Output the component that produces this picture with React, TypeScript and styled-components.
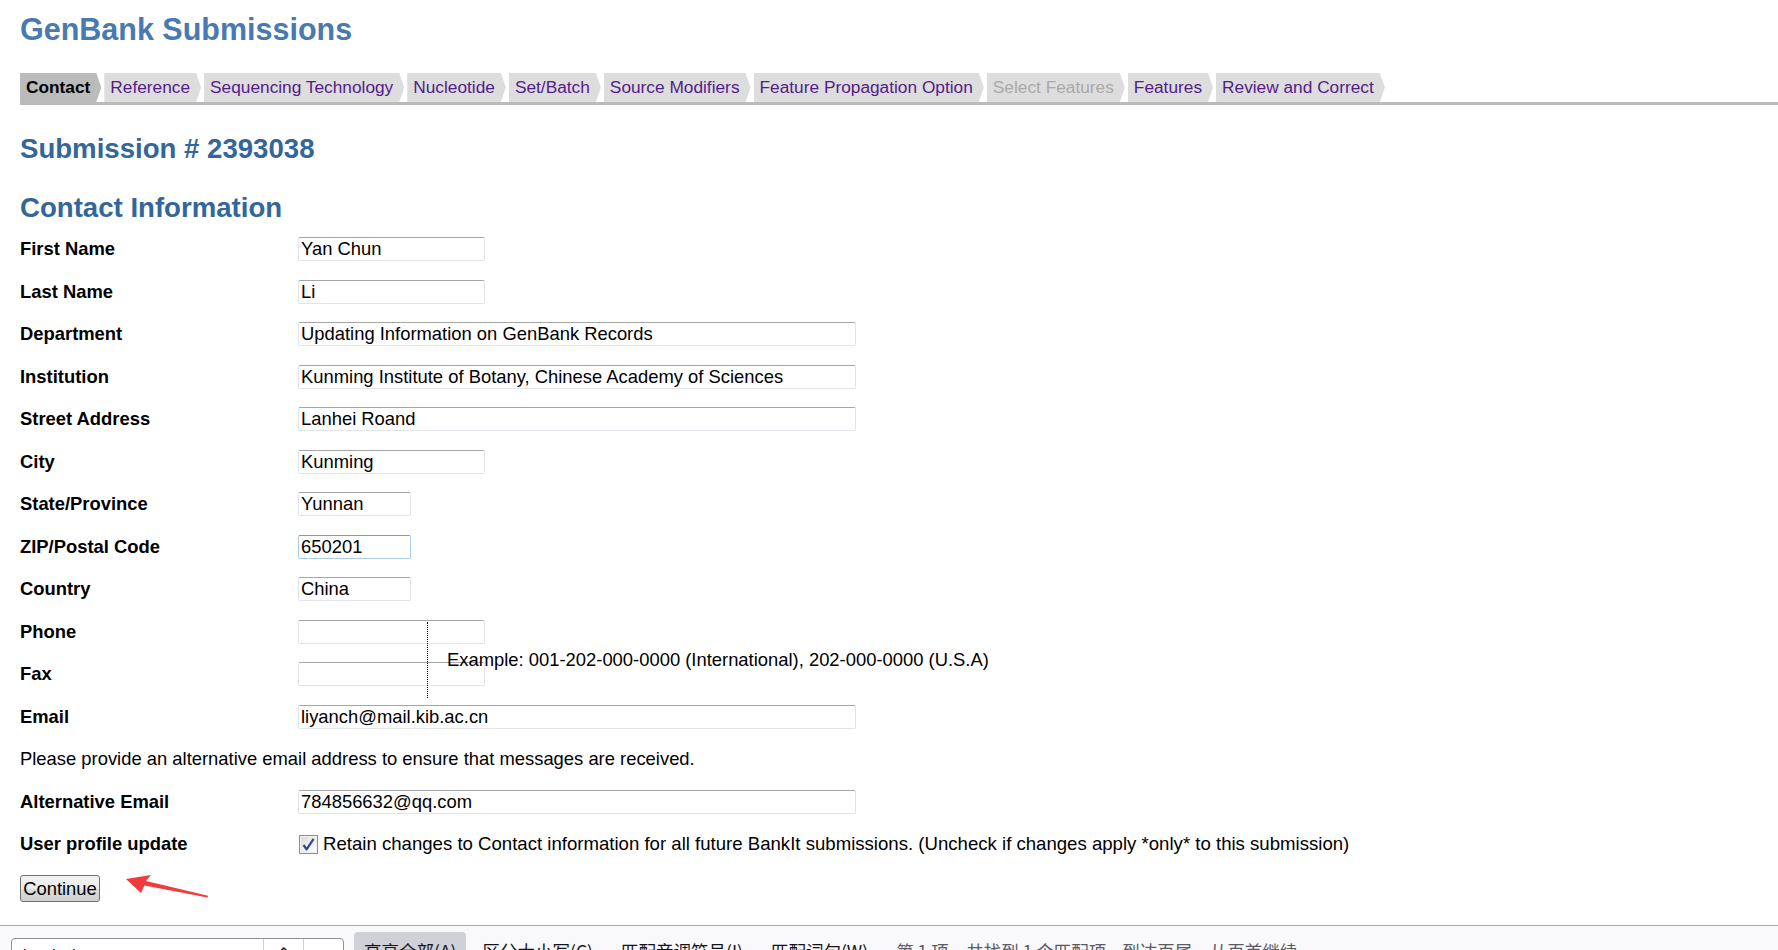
import { useState } from 'react';
import styled, { createGlobalStyle } from 'styled-components';

const GlobalStyle = createGlobalStyle`
  html, body {
    margin: 0;
    padding: 0;
    background: #fff;
  }
  body {
    font-family: 'Liberation Sans', Arial, sans-serif;
    color: #000;
  }
`;

type Step = { name: string; active?: boolean; disabled?: boolean };

const steps: Step[] = [
  { name: 'Contact', active: true },
  { name: 'Reference' },
  { name: 'Sequencing Technology' },
  { name: 'Nucleotide' },
  { name: 'Set/Batch' },
  { name: 'Source Modifiers' },
  { name: 'Feature Propagation Option' },
  { name: 'Select Features', disabled: true },
  { name: 'Features' },
  { name: 'Review and Correct' },
];

type Field = { label: string; value: string; size: 'short' | 'medium' | 'wide'; focused?: boolean };

const topFields: Field[] = [
  { label: 'First Name', value: 'Yan Chun', size: 'medium' },
  { label: 'Last Name', value: 'Li', size: 'medium' },
  { label: 'Department', value: 'Updating Information on GenBank Records', size: 'wide' },
  { label: 'Institution', value: 'Kunming Institute of Botany, Chinese Academy of Sciences', size: 'wide' },
  { label: 'Street Address', value: 'Lanhei Roand', size: 'wide' },
  { label: 'City', value: 'Kunming', size: 'medium' },
  { label: 'State/Province', value: 'Yunnan', size: 'short' },
  { label: 'ZIP/Postal Code', value: '650201', size: 'short', focused: true },
  { label: 'Country', value: 'China', size: 'short' },
];

const fieldWidths = { short: 113, medium: 187, wide: 558 };

function App() {
  const [values, setValues] = useState<Record<string, string>>(() => {
    const v: Record<string, string> = {
      Phone: '',
      Fax: '',
      Email: 'liyanch@mail.kib.ac.cn',
      'Alternative Email': '784856632@qq.com',
    };
    topFields.forEach((f) => (v[f.label] = f.value));
    return v;
  });
  const [retain, setRetain] = useState(true);

  const update = (key: string, value: string) =>
    setValues((prev) => ({ ...prev, [key]: value }));

  return (
    <>
      <GlobalStyle />
      <StyledPage>
        <StyledContent>
          <StyledTitle>GenBank Submissions</StyledTitle>
          <StyledTabBar>
            {steps.map((step) => (
              <StyledTab key={step.name} $active={step.active} $disabled={step.disabled}>
                {step.name}
              </StyledTab>
            ))}
          </StyledTabBar>

          <StyledHeading className="submission">Submission # 2393038</StyledHeading>
          <StyledHeading className="section">Contact Information</StyledHeading>

          <StyledForm onSubmit={(e) => e.preventDefault()}>
            {topFields.map((f) => (
              <StyledRow key={f.label}>
                <StyledLabel>{f.label}</StyledLabel>
                <StyledInput
                  $width={fieldWidths[f.size]}
                  $focused={f.focused}
                  value={values[f.label]}
                  onChange={(e) => update(f.label, e.target.value)}
                />
              </StyledRow>
            ))}

            <StyledPhoneBlock>
              <StyledLabel className="phone-label">Phone</StyledLabel>
              <StyledInput
                className="phone-input"
                $width={187}
                value={values.Phone}
                onChange={(e) => update('Phone', e.target.value)}
              />
              <StyledLabel className="fax-label">Fax</StyledLabel>
              <StyledInput
                className="fax-input"
                $width={187}
                value={values.Fax}
                onChange={(e) => update('Fax', e.target.value)}
              />
              <StyledExample>
                Example: 001-202-000-0000 (International), 202-000-0000 (U.S.A)
              </StyledExample>
            </StyledPhoneBlock>

            <StyledRow>
              <StyledLabel>Email</StyledLabel>
              <StyledInput
                $width={558}
                value={values.Email}
                onChange={(e) => update('Email', e.target.value)}
              />
            </StyledRow>
            <StyledNote>
              Please provide an alternative email address to ensure that messages are received.
            </StyledNote>
            <StyledRow>
              <StyledLabel>Alternative Email</StyledLabel>
              <StyledInput
                $width={558}
                value={values['Alternative Email']}
                onChange={(e) => update('Alternative Email', e.target.value)}
              />
            </StyledRow>
            <StyledRow>
              <StyledLabel>User profile update</StyledLabel>
              <StyledCheckLine onClick={() => setRetain((r) => !r)}>
                <StyledCheckbox>
                  {retain && (
                    <svg width="15" height="15" viewBox="0 0 15 15">
                      <path
                        d="M2.5 8 L5.6 12.4 L12.6 1.8"
                        fill="none"
                        stroke="#2b4a94"
                        strokeWidth="2.2"
                        strokeLinejoin="round"
                      />
                    </svg>
                  )}
                </StyledCheckbox>
                Retain changes to Contact information for all future BankIt submissions. (Uncheck if
                changes apply *only* to this submission)
              </StyledCheckLine>
            </StyledRow>
            <StyledButtonRow>
              <StyledButton type="submit">Continue</StyledButton>
              <StyledArrow width="82" height="26" viewBox="0 0 82 26">
                <path d="M0 4 L25 0 L20 6 L82 20.8 L81.5 22.4 L18.5 10.5 L15 18 Z" fill="#f23c3c" />
              </StyledArrow>
            </StyledButtonRow>
          </StyledForm>
        </StyledContent>

        <StyledFindBar>
          <StyledFindGroup>
            <StyledFindInput defaultValue="rbcL-kutb" />
            <StyledFindArrow>⌃</StyledFindArrow>
            <StyledFindArrow>⌄</StyledFindArrow>
          </StyledFindGroup>
          <StyledFindToggle $pressed>高亮全部(A)</StyledFindToggle>
          <StyledFindToggle>区分大小写(C)</StyledFindToggle>
          <StyledFindToggle>匹配音调符号(I)</StyledFindToggle>
          <StyledFindToggle>匹配词句(W)</StyledFindToggle>
          <StyledFindStatus>第 1 项，共找到 1 个匹配项</StyledFindStatus>
          <StyledFindStatus>到达页尾，从页首继续</StyledFindStatus>
        </StyledFindBar>
      </StyledPage>
    </>
  );
}

export default App;

const StyledPage = styled.div`
  height: 100vh;
  display: flex;
  flex-direction: column;
  overflow: hidden;
`;

const StyledContent = styled.div`
  flex: 1;
  padding: 0 0 0 20px;
  overflow: hidden;
`;

const StyledTitle = styled.h1`
  margin: 0;
  padding-top: 11px;
  height: 73px;
  box-sizing: border-box;
  font-size: 30.5px;
  line-height: 36px;
  font-weight: bold;
  color: #4879b0;
`;

const StyledTabBar = styled.nav`
  display: flex;
  gap: 3px;
  height: 29px;
  border-bottom: 3px solid #bbbbbb;
`;

const StyledTab = styled.a<{ $active?: boolean; $disabled?: boolean }>`
  display: flex;
  align-items: center;
  padding: 0 11px 0 6px;
  font-size: 17.3px;
  font-weight: ${(p) => (p.$active ? 'bold' : 'normal')};
  color: ${(p) => (p.$active ? '#000' : p.$disabled ? '#a9a9a9' : '#551a8b')};
  background: ${(p) => (p.$active ? '#bbbbbb' : '#dddddd')};
  cursor: pointer;
  clip-path: polygon(0 0, calc(100% - 5px) 0, 100% 50%, calc(100% - 5px) 100%, 0 100%);
  white-space: nowrap;
`;

const StyledHeading = styled.h2`
  margin: 0;
  font-size: 27.6px;
  font-weight: bold;
  color: #336699;
  line-height: 32px;

  &.submission {
    margin-top: 28px;
  }

  &.section {
    margin-top: 27px;
  }
`;

const StyledForm = styled.form`
  margin-top: 4px;
  display: flex;
  flex-direction: column;
  font-size: 18.4px;
`;

const StyledRow = styled.div`
  display: grid;
  grid-template-columns: 278px 1fr;
  align-items: center;
  height: 42.5px;
`;

const StyledLabel = styled.label`
  font-weight: bold;
  font-size: 18.4px;
`;

const StyledInput = styled.input<{ $width: number; $focused?: boolean }>`
  width: ${(p) => p.$width}px;
  height: 24px;
  box-sizing: border-box;
  padding: 0 2px;
  font-family: 'Liberation Sans', Arial, sans-serif;
  font-size: 18.4px;
  color: #000;
  background: transparent;
  border: 1px solid ${(p) => (p.$focused ? '#a9cbec' : '#e1e4e8')};
  border-top-color: ${(p) => (p.$focused ? '#6e9fcf' : '#a6a6a6')};
  border-radius: 2px;
  outline: none;
`;

const StyledPhoneBlock = styled.div`
  display: grid;
  grid-template-columns: 278px 129px 1fr;
  grid-template-rows: 42.5px 42.5px;
  align-items: center;

  .phone-label {
    grid-row: 1;
    grid-column: 1;
  }
  .phone-input {
    grid-row: 1;
    grid-column: 2;
  }
  .fax-label {
    grid-row: 2;
    grid-column: 1;
  }
  .fax-input {
    grid-row: 2;
    grid-column: 2;
  }
`;

const StyledExample = styled.div`
  grid-row: 1 / 3;
  grid-column: 3;
  align-self: stretch;
  display: flex;
  align-items: center;
  margin: 11px 0 -2px;
  padding-left: 19px;
  border-left: 1px dotted #000;
  font-size: 18.4px;
`;

const StyledNote = styled.p`
  margin: 0;
  height: 42.5px;
  display: flex;
  align-items: center;
`;

const StyledCheckLine = styled.div`
  display: flex;
  align-items: center;
  gap: 5px;
  font-size: 18.6px;
  cursor: pointer;
  white-space: nowrap;
`;

const StyledCheckbox = styled.span`
  display: inline-flex;
  align-items: center;
  justify-content: center;
  width: 19px;
  height: 19px;
  box-sizing: border-box;
  margin-left: 1px;
  border: 1px solid #8f8f8f;
  background: linear-gradient(135deg, #d8d8d8 0%, #f2f2f2 60%, #ffffff 100%);
  box-shadow: inset 0 0 0 1px #f0f0f0;
`;

const StyledButtonRow = styled.div`
  position: relative;
  display: flex;
  align-items: center;
  height: 46px;
`;

const StyledButton = styled.button`
  width: 80px;
  height: 27px;
  padding: 0;
  font-family: 'Liberation Sans', Arial, sans-serif;
  font-size: 18.4px;
  color: #000;
  border: 1px solid #707070;
  border-radius: 3px;
  background: linear-gradient(#f2f2f2 0%, #ebebeb 50%, #dddddd 51%, #cfcfcf 100%);
  cursor: pointer;
`;

const StyledArrow = styled.svg`
  position: absolute;
  left: 106px;
  top: 9px;
`;

const StyledFindBar = styled.div`
  flex: 0 0 25px;
  display: flex;
  align-items: flex-start;
  padding: 6px 0 0 11px;
  box-sizing: border-box;
  background: #f9f9fb;
  border-top: 1px solid #ababab;
  overflow: hidden;
  font-family: 'Noto Sans CJK SC', sans-serif;
  font-size: 17.5px;
  color: #15141a;
`;

const StyledFindGroup = styled.div`
  display: flex;
  margin-top: 6px;
  height: 30px;
  border: 1px solid #8f8f9d;
  border-radius: 4px;
  background: #fff;
`;

const StyledFindInput = styled.input`
  width: 245px;
  border: none;
  outline: none;
  padding: 0 0 0 6px;
  font-family: 'Liberation Sans', Arial, sans-serif;
  font-size: 15px;
  background: transparent;
`;

const StyledFindArrow = styled.span`
  width: 39px;
  display: flex;
  justify-content: center;
  border-left: 1px solid #cfcfd8;
  font-size: 16px;
  line-height: 26px;
`;

const StyledFindToggle = styled.span<{ $pressed?: boolean }>`
  margin-left: ${(p) => (p.$pressed ? '10px' : '0')};
  padding: ${(p) => (p.$pressed ? '6px 10px' : '6px 12px 6px 16px')};
  border-radius: 4px;
  background: ${(p) => (p.$pressed ? '#d0d0d7' : 'transparent')};
  white-space: nowrap;
`;

const StyledFindStatus = styled.span`
  padding: 6px 0 0 16px;
  color: #5b5b66;
  white-space: nowrap;
`;
